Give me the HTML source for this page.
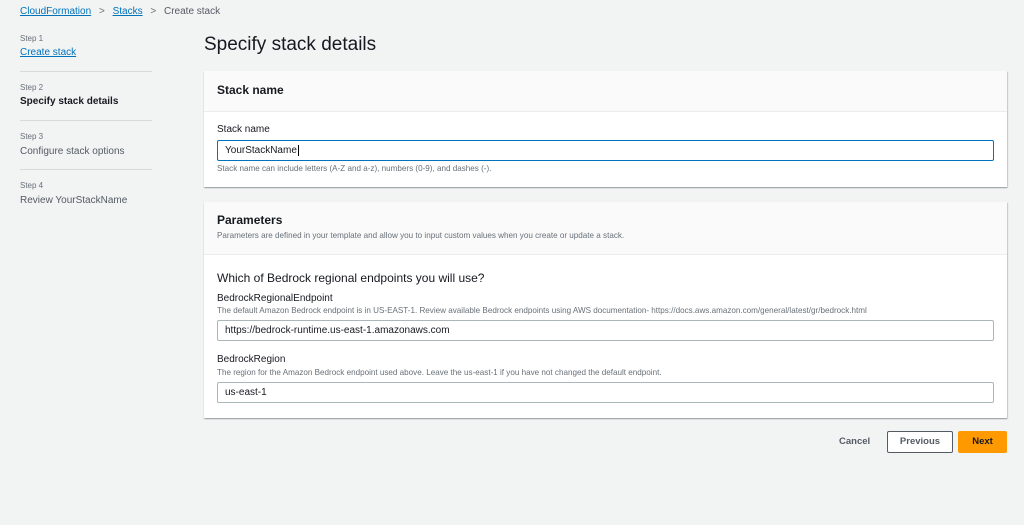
<!DOCTYPE html>
<html><head><style>
*{box-sizing:border-box;margin:0;padding:0}
body{width:1024px;height:525px;background:#f2f3f3;font-family:"Liberation Sans",sans-serif;color:#16191f;position:relative;overflow:hidden}
.a{position:absolute;white-space:nowrap}
.lnk{color:#0073bb;text-decoration:underline}
.card{position:absolute;left:204px;width:803px;background:#fff;box-shadow:0 1px 1px rgba(0,28,36,.3),1px 1px 1px rgba(0,28,36,.15);}
.hd{background:#fafafa;border-bottom:1px solid #eaeded;position:relative}
.in{position:absolute;left:13px;width:777px;height:21px;border:1px solid #aab7b8;border-radius:2px;font-size:10px;padding:4px 7px;background:#fff}
.sm{font-size:8.1px;color:#687078}
.lbl{font-size:10px;color:#16191f}
.hr{position:absolute;left:20px;width:132px;border-top:1px solid #d5dbdb}
.step{font-size:8px;color:#687078}
</style></head><body>
<div class="a" style="left:20px;top:6px;font-size:10px"><span class="lnk">CloudFormation</span> <span style="color:#687078;margin:0 5px">&gt;</span> <span class="lnk">Stacks</span> <span style="color:#687078;margin:0 5px">&gt;</span> <span style="color:#545b64">Create stack</span></div>

<div class="a step" style="left:20px;top:34px">Step 1</div>
<div class="a lnk" style="left:20px;top:47px;font-size:10px">Create stack</div>
<div class="hr" style="top:71px"></div>
<div class="a step" style="left:20px;top:83px">Step 2</div>
<div class="a" style="left:20px;top:96px;font-size:10px;font-weight:bold">Specify stack details</div>
<div class="hr" style="top:120px"></div>
<div class="a step" style="left:20px;top:132px">Step 3</div>
<div class="a" style="left:20px;top:146px;font-size:10px;color:#545b64">Configure stack options</div>
<div class="hr" style="top:169px"></div>
<div class="a step" style="left:20px;top:181px">Step 4</div>
<div class="a" style="left:20px;top:195px;font-size:10px;color:#545b64">Review YourStackName</div>

<div class="a" style="left:204px;top:34px;font-size:19px;color:#16191f">Specify stack details</div>

<div class="card" style="top:71px;height:116px">
 <div class="hd" style="height:41px"><div class="a" style="left:13px;top:12px;font-size:12px;font-weight:bold">Stack name</div></div>
 <div class="a lbl" style="left:13px;top:53px">Stack name</div>
 <div class="in" style="top:69px;border:1.5px solid #0073bb;">YourStackName<span style="border-left:1px solid #000;margin-left:1px"></span></div>
 <div class="a sm" style="left:13px;top:93px">Stack name can include letters (A-Z and a-z), numbers (0-9), and dashes (-).</div>
</div>

<div class="card" style="top:202px;height:216px">
 <div class="hd" style="height:53px">
  <div class="a" style="left:13px;top:11px;font-size:12px;font-weight:bold">Parameters</div>
  <div class="a sm" style="left:13px;top:29px">Parameters are defined in your template and allow you to input custom values when you create or update a stack.</div>
 </div>
 <div class="a" style="left:13px;top:69px;font-size:12px">Which of Bedrock regional endpoints you will use?</div>
 <div class="a lbl" style="left:13px;top:91px">BedrockRegionalEndpoint</div>
 <div class="a sm" style="left:13px;top:104px">The default Amazon Bedrock endpoint is in US-EAST-1. Review available Bedrock endpoints using AWS documentation- https://docs.aws.amazon.com/general/latest/gr/bedrock.html</div>
 <div class="in" style="top:118px">https://bedrock-runtime.us-east-1.amazonaws.com</div>
 <div class="a lbl" style="left:13px;top:152px">BedrockRegion</div>
 <div class="a sm" style="left:13px;top:166px">The region for the Amazon Bedrock endpoint used above. Leave the us-east-1 if you have not changed the default endpoint.</div>
 <div class="in" style="top:180px">us-east-1</div>
</div>

<div class="a" style="left:839px;top:436px;font-size:9.5px;font-weight:bold;color:#545b64">Cancel</div>
<div class="a" style="left:887px;top:431px;width:66px;height:22px;border:1px solid #545b64;border-radius:2px;background:#fff;font-size:9.5px;font-weight:bold;color:#545b64;text-align:center;line-height:20px">Previous</div>
<div class="a" style="left:958px;top:431px;width:49px;height:22px;border-radius:2px;background:#ff9900;font-size:9.5px;font-weight:bold;color:#16191f;text-align:center;line-height:22px">Next</div>
</body></html>
